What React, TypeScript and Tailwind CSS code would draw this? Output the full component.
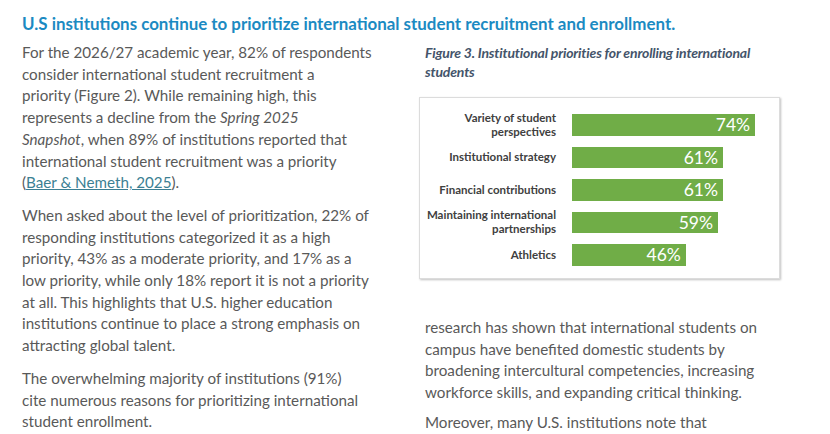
import React from "react";

type Bar = { label: string[]; value: number };

const bars: Bar[] = [
  { label: ["Variety of student", "perspectives"], value: 74 },
  { label: ["Institutional strategy"], value: 61 },
  { label: ["Financial contributions"], value: 61 },
  { label: ["Maintaining international", "partnerships"], value: 59 },
  { label: ["Athletics"], value: 46 },
];

function Lines({ lines }: { lines: React.ReactNode[] }) {
  return (
    <>
      {lines.map((l, i) => (
        <span key={i} className="block whitespace-nowrap">
          {l}
        </span>
      ))}
    </>
  );
}

function Chart() {
  return (
    <div className="mt-[16px] h-[182px] w-[361px] border border-[#dcdcdc] bg-white pt-[16px] shadow-[1px_1px_2px_rgba(0,0,0,0.25)]">
      <div className="flex flex-col gap-[11px]">
        {bars.map((b, i) => (
          <div key={i} className="flex h-[21.5px] items-center">
            <div className="w-[136px] shrink-0 text-right text-[11.5px] font-bold leading-[14px] text-[#404040]">
              {b.label.map((l, j) => (
                <div key={j} className="whitespace-nowrap">
                  {l}
                </div>
              ))}
            </div>
            <div className="ml-[16px] flex h-full items-center">
              <div
                className="flex h-full items-center justify-end bg-[#70ad47] pr-[5px] text-[17.5px] leading-none text-white"
                style={{ width: `${b.value * 2.475}px` }}
              >
                {b.value}%
              </div>
            </div>
          </div>
        ))}
      </div>
    </div>
  );
}

export default function App() {
  return (
    <div className="relative h-[434px] w-[830px] overflow-hidden bg-white font-['Lato',sans-serif]">
      <h1 className="whitespace-nowrap pl-[22px] pt-[12px] text-[16.9px] font-bold leading-[24px] text-[#1b8ac2]">
        U.S institutions continue to prioritize international student recruitment and enrollment.
      </h1>

      <div className="flex">
        {/* left column */}
        <div className="w-[419px] shrink-0 pl-[22px] pt-[6px] text-[15.2px] leading-[21.7px] text-[#595959]">
          <p>
            <Lines
              lines={[
                "For the 2026/27 academic year, 82% of respondents",
                "consider international student recruitment a",
                "priority (Figure 2). While remaining high, this",
                <>
                  represents a decline from the <i>Spring 2025</i>
                </>,
                <>
                  <i>Snapshot</i>, when 89% of institutions reported that
                </>,
                "international student recruitment was a priority",
                <>
                  (<a className="text-[#3b7f93] underline">Baer &amp; Nemeth, 2025</a>).
                </>,
              ]}
            />
          </p>
          <p className="mt-[11px]">
            <Lines
              lines={[
                "When asked about the level of prioritization, 22% of",
                "responding institutions categorized it as a high",
                "priority, 43% as a moderate priority, and 17% as a",
                "low priority, while only 18% report it is not a priority",
                "at all. This highlights that U.S. higher education",
                "institutions continue to place a strong emphasis on",
                "attracting global talent.",
              ]}
            />
          </p>
          <p className="mt-[11px]">
            <Lines
              lines={[
                "The overwhelming majority of institutions (91%)",
                "cite numerous reasons for prioritizing international",
                "student enrollment.",
              ]}
            />
          </p>
        </div>

        {/* right column */}
        <div className="pt-[7px]">
          <div className="pl-[6px] text-[14px] font-bold italic leading-[19px] tracking-[-0.18px] text-[#44546a]">
            <Lines
              lines={[
                "Figure 3. Institutional priorities for enrolling international",
                "students",
              ]}
            />
          </div>
          <Chart />
          <div className="pl-[6px] pt-[38px] text-[15.2px] leading-[21.7px] text-[#595959]">
            <p>
              <Lines
                lines={[
                  "research has shown that international students on",
                  "campus have benefited domestic students by",
                  "broadening intercultural competencies, increasing",
                  "workforce skills, and expanding critical thinking.",
                ]}
              />
            </p>
            <p className="mt-[8px]">
              <Lines lines={["Moreover, many U.S. institutions note that"]} />
            </p>
          </div>
        </div>
      </div>
    </div>
  );
}
